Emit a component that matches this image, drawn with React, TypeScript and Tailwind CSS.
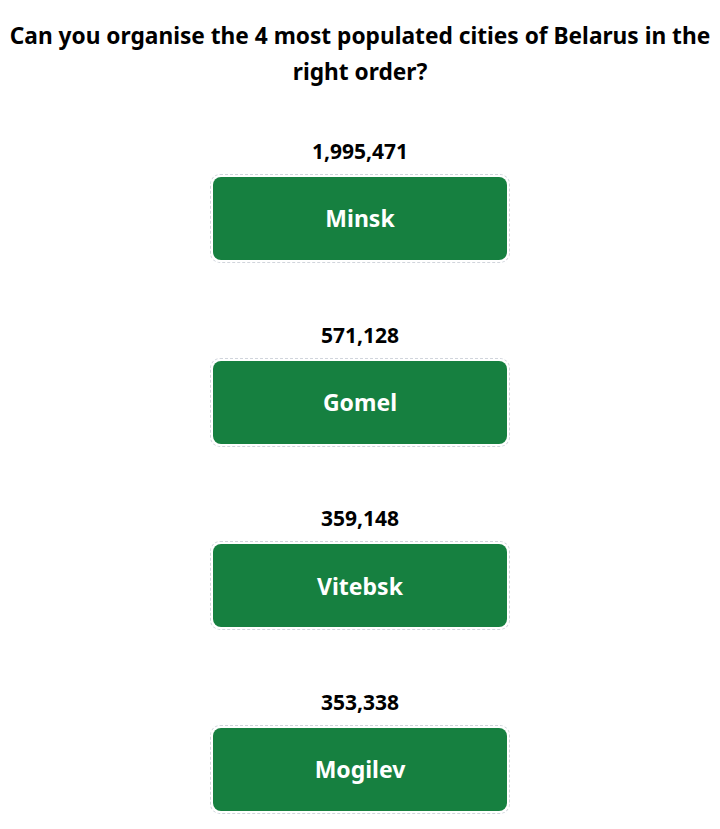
const cities = [
  { name: 'Minsk', population: '1,995,471' },
  { name: 'Gomel', population: '571,128' },
  { name: 'Vitebsk', population: '359,148' },
  { name: 'Mogilev', population: '353,338' },
]

const App = () => {
  return (
    <div className="min-h-screen bg-white text-black font-['Noto_Sans',sans-serif]">
      <h1 className="pt-[18px] px-1 text-center text-[22.7px] leading-[36px] font-bold">
        Can you organise the 4 most populated cities of Belarus in the right order?
      </h1>

      <div className="mt-[47px] flex flex-col items-center gap-[57.7px]">
        {cities.map(city => (
          <div key={city.name} className="flex flex-col items-center">
            <span className="text-[21px] leading-[28px] font-bold">{city.population}</span>
            <div className="mt-[9px] w-[300px] h-[89px] p-[2px] border border-dashed border-gray-300 rounded-[10px]">
              <div className="h-full rounded-lg bg-[#168040] flex items-center justify-center">
                <span className="text-white text-[23px] font-bold">{city.name}</span>
              </div>
            </div>
          </div>
        ))}
      </div>
    </div>
  )
}

export default App
